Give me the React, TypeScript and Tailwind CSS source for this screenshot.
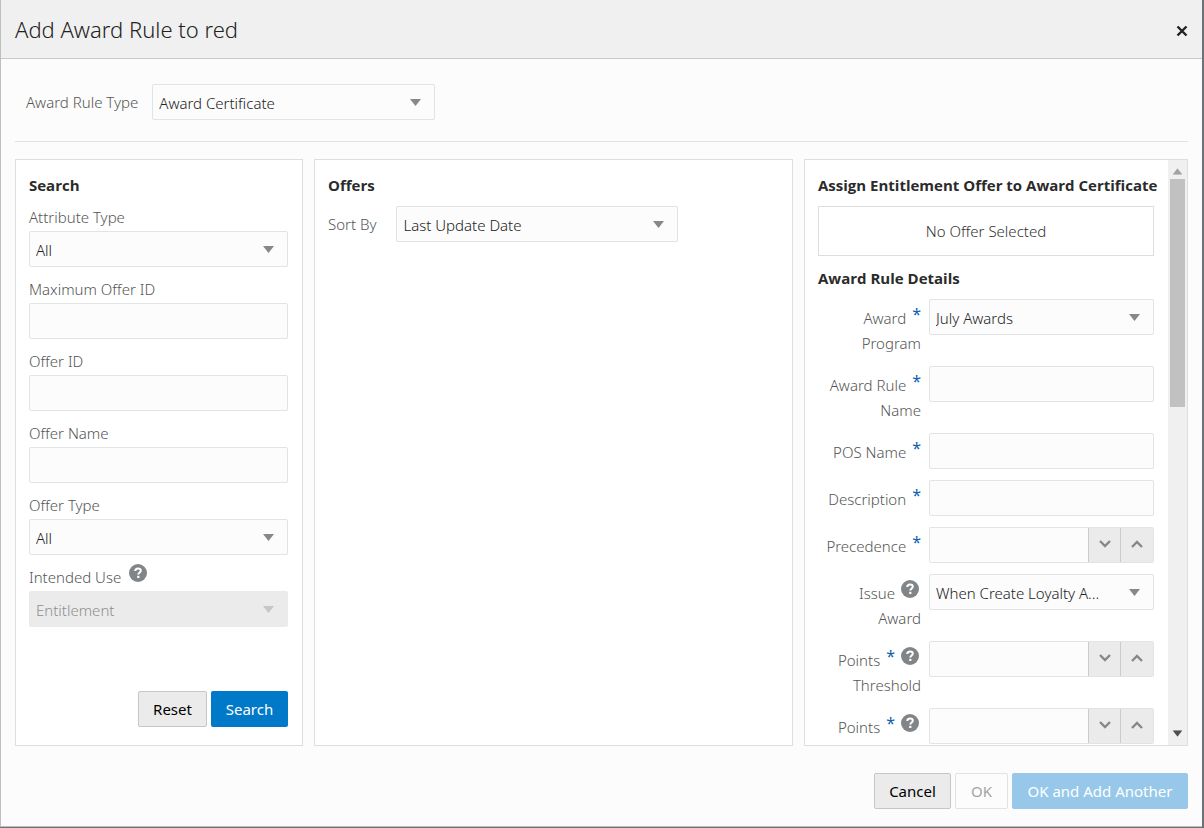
import { type ReactNode, type SelectHTMLAttributes } from "react";

const box = "w-full h-9 rounded-xs border border-[#dfe4e7] bg-[#fcfcfc] px-1.5";

function Caret({ className }: { className: string }) {
  return (
    <svg viewBox="0 0 11 7" className={`w-[11px] h-[7px] ${className}`}>
      <path d="M0 0h11L5.500 7z" fill="currentColor" />
    </svg>
  );
}

function Select({
  option,
  ...props
}: { option: string } & SelectHTMLAttributes<HTMLSelectElement>) {
  return (
    <div className="relative w-full text-[#222]">
      <select
        {...props}
        className={`${box} block appearance-none truncate pt-0.5 pr-10 disabled:bg-[#ebebeb] disabled:border-[#ebebeb] disabled:text-[#8e8e8e] disabled:opacity-100`}
      >
        <option>{option}</option>
      </select>
      <Caret
        className={`absolute right-3.5 top-[15px] pointer-events-none ${
          props.disabled ? "text-[#c4c6c8]" : "text-[#85898c]"
        }`}
      />
    </div>
  );
}

function Help({ className }: { className: string }) {
  return (
    <button
      type="button"
      aria-label="Help"
      className={`shrink-0 self-start ${className}`}
    >
      <svg viewBox="0 0 18 18" className="block size-[18px]">
        <circle cx="9" cy="9" r="9" fill="#828588" />
        <path
          d="M6.200 7C6.300 5.300 7.400 4.400 9 4.400s2.800.9 2.800 2.300c0 1.800-2.500 1.900-2.500 3.900"
          fill="none"
          stroke="#fff"
          strokeWidth="2"
        />
        <path d="M8.200 11.800h2.200V14H8.200z" fill="#fff" />
      </svg>
    </button>
  );
}

function Chevron({ up }: { up?: boolean }) {
  return (
    <svg viewBox="0 0 12 8" className="w-3 h-2">
      <path
        d={up ? "M1 7l5-5 5 5" : "M1 1l5 5 5-5"}
        fill="none"
        stroke="#85898c"
        strokeWidth="2.400"
      />
    </svg>
  );
}

function Stepper({ id }: { id: string }) {
  const btn =
    "shrink-0 grid place-items-center bg-[#ebebeb] border-l border-[#c9cccf] pb-0.5";
  return (
    <div className="flex w-full h-9 rounded-xs border border-[#dfe4e7] bg-[#fcfcfc] overflow-hidden">
      <input id={id} className="flex-1 min-w-0 px-1.5" />
      <button type="button" aria-label="Decrease" className={`${btn} w-8`}>
        <Chevron />
      </button>
      <button type="button" aria-label="Increase" className={`${btn} w-[33px]`}>
        <Chevron up />
      </button>
    </div>
  );
}

function SearchField({
  id,
  label,
  help,
  children,
}: {
  id: string;
  label: string;
  help?: boolean;
  children: ReactNode;
}) {
  return (
    <div className="mb-2">
      <div className="flex h-7 items-center gap-2 text-[#555]">
        <label htmlFor={id}>{label}</label>
        {help && <Help className="mt-px" />}
      </div>
      {children}
    </div>
  );
}

function DetailRow({
  id,
  label,
  second,
  required,
  help,
  children,
}: {
  id: string;
  label: string;
  second?: string;
  required?: boolean;
  help?: boolean;
  children: ReactNode;
}) {
  return (
    <div className="flex gap-2 mb-[11px]">
      <div className="w-[103px] shrink-0 pt-[7px] -mb-px text-right text-[#555] leading-[25px]">
        <div className="flex justify-end gap-1.5">
          <label htmlFor={id} className="whitespace-nowrap">
            {label}
          </label>
          {required && (
            <span className="-mt-1 font-normal text-base leading-[25px] text-[#0a5fb4]">
              *
            </span>
          )}
          {help && <Help className="-mt-px mr-0.5" />}
        </div>
        {second && (
          <label htmlFor={id} className="block">
            {second}
          </label>
        )}
      </div>
      <div className="flex-1 min-w-0">{children}</div>
    </div>
  );
}

function Scrollbar() {
  return (
    <div className="w-[19px] shrink-0 flex flex-col items-center bg-[#f0f0f0] py-2">
      <Caret className="rotate-180 text-[#a3a3a3] scale-90" />
      <div className="mt-1 w-[15px] h-[228px] bg-[#c1c1c1]" />
      <Caret className="mt-auto text-[#505050] scale-90" />
    </div>
  );
}

export default function App() {
  const panel = "bg-white border border-[#dcdfe1] min-h-0 min-w-0";
  const heading = "font-['Open_Sans',sans-serif] font-bold leading-[26px] text-[#2b2b2b]";

  return (
    <div className="h-screen min-h-[600px] flex flex-col bg-[#6f7275] pr-0.5 overflow-hidden font-['Noto_Sans','Open_Sans',sans-serif] font-light text-[15px] text-[#333]">
      <div
        role="dialog"
        aria-labelledby="title"
        className="flex-1 min-h-0 flex flex-col bg-[#fcfcfc] border-l border-b border-[#bfbfbf]"
      >
        <header className="h-[59px] shrink-0 flex items-center justify-between bg-[#f0f0f0] border-b border-[#c9c9c9] px-3.5">
          <h1 id="title" className="text-[22px] text-[#222]">
            Add Award Rule to red
          </h1>
          <button type="button" aria-label="Close" className="pt-1">
            <svg viewBox="0 0 12 12" className="size-3">
              <path d="M1.500 1.500l9 9m0-9l-9 9" stroke="#222" strokeWidth="2.400" />
            </svg>
          </button>
        </header>

        <div className="flex-1 min-h-0 flex flex-col px-3.5">
          <div className="flex items-center gap-3.5 shrink-0 h-[83px] pt-[25px] pb-[21px] pl-[11px] border-b border-[#e0e3e5]">
            <label htmlFor="type" className="text-[#555] whitespace-nowrap">
              Award Rule Type
            </label>
            <div className="w-[283px]">
              <Select id="type" option="Award Certificate" />
            </div>
          </div>

          <main className="flex-1 min-h-0 grid grid-cols-[288fr_479fr_384fr] grid-rows-1 gap-[11px] mt-[17px]">
            <section className={`${panel} flex flex-col pl-[13px] pr-3.5 pt-3 pb-[18px]`}>
              <h2 className={`${heading} mb-[5px]`}>Search</h2>
              <SearchField id="attr" label="Attribute Type">
                <Select id="attr" option="All" />
              </SearchField>
              <SearchField id="max" label="Maximum Offer ID">
                <input id="max" className={box} />
              </SearchField>
              <SearchField id="offer-id" label="Offer ID">
                <input id="offer-id" className={box} />
              </SearchField>
              <SearchField id="offer-name" label="Offer Name">
                <input id="offer-name" className={box} />
              </SearchField>
              <SearchField id="offer-type" label="Offer Type">
                <Select id="offer-type" option="All" />
              </SearchField>
              <SearchField id="use" label="Intended Use" help>
                <Select id="use" option="Entitlement" disabled />
              </SearchField>
              <div className="mt-auto flex justify-end gap-1 font-normal">
                <button className="h-9 w-[69px] rounded-xs border border-[#c4c7c9] bg-[#ebebeb] text-black">
                  Reset
                </button>
                <button className="h-9 w-[77px] rounded-xs bg-[#0079c9] text-white">
                  Search
                </button>
              </div>
            </section>

            <section className={`${panel} px-[13px] pt-3`}>
              <h2 className={heading}>Offers</h2>
              <div className="mt-2 flex items-center gap-5">
                <label htmlFor="sort" className="text-[#555]">
                  Sort By
                </label>
                <div className="w-[282px]">
                  <Select id="sort" option="Last Update Date" />
                </div>
              </div>
            </section>

            <section className={`${panel} flex`}>
              <div className="flex-1 min-w-0 overflow-hidden pl-[13px] pr-3.5 pt-3">
                <h2 className={`${heading} whitespace-nowrap`}>
                  Assign Entitlement Offer to Award Certificate
                </h2>
                <div className="mt-2 h-[50px] grid place-items-center border border-[#dcdfe1]">
                  No Offer Selected
                </div>
                <h2 className={`${heading} mt-[9px] mb-2`}>Award Rule Details</h2>
                <DetailRow id="program" label="Award" second="Program" required>
                  <Select id="program" option="July Awards" />
                </DetailRow>
                <DetailRow id="rule" label="Award Rule" second="Name" required>
                  <input id="rule" className={box} />
                </DetailRow>
                <DetailRow id="pos" label="POS Name" required>
                  <input id="pos" className={box} />
                </DetailRow>
                <DetailRow id="desc" label="Description" required>
                  <input id="desc" className={box} />
                </DetailRow>
                <DetailRow id="prec" label="Precedence" required>
                  <Stepper id="prec" />
                </DetailRow>
                <DetailRow id="issue" label="Issue" second="Award" help>
                  <Select id="issue" option="When Create Loyalty A..." />
                </DetailRow>
                <DetailRow id="threshold" label="Points" second="Threshold" required help>
                  <Stepper id="threshold" />
                </DetailRow>
                <DetailRow id="points" label="Points" required help>
                  <Stepper id="points" />
                </DetailRow>
              </div>
              <Scrollbar />
            </section>
          </main>

          <footer className="shrink-0 flex justify-end gap-1 pt-[27px] pb-[17px] font-normal">
            <button className="h-9 w-[77px] rounded-xs border border-[#c4c7c9] bg-[#ebebeb] text-black">
              Cancel
            </button>
            <button
              disabled
              className="h-9 w-[53px] rounded-xs border border-[#e0e3e5] text-[#a3a3a3]"
            >
              OK
            </button>
            <button disabled className="h-9 w-[176px] rounded-xs bg-[#97c8e9] text-white">
              OK and Add Another
            </button>
          </footer>
        </div>
      </div>
      <div className="h-px shrink-0" />
    </div>
  );
}
